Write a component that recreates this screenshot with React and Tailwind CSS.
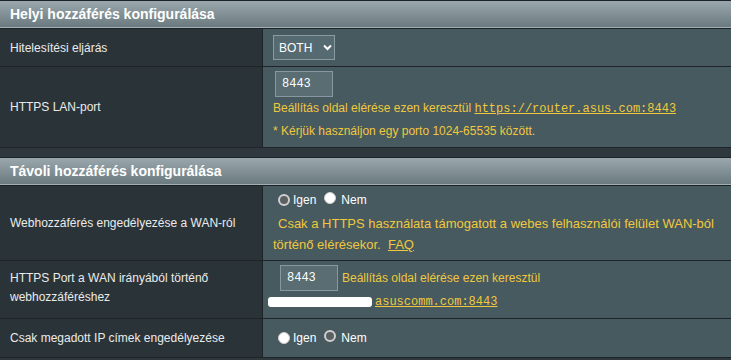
import React from "react";

const font = { fontFamily: '"Liberation Sans", Arial, sans-serif' };

function Header({ children }) {
  return (
    <div className="h-[29px] border-t border-[#1c2326] flex flex-col">
      <div className="h-[26px] bg-gradient-to-b from-[#9aa8ad] to-[#6b7a7f] flex items-center pl-[10px] text-white text-[14px] font-bold">
        {children}
      </div>
      <div className="h-px bg-[#a3b0b3]" />
      <div className="h-px bg-[#1c2326]" />
    </div>
  );
}

function Row({ h, label, children, labelClass = "" }) {
  return (
    <div className={`flex border-b border-[#1e2427] ${h}`}>
      <div className={`w-[263px] shrink-0 bg-[#2a3438] border-r border-[#1e2427] flex items-center pl-[10px] text-[12px] text-[#ebebeb] ${labelClass}`}>
        {label}
      </div>
      <div className="flex-1 bg-[#475a5f] min-w-0">{children}</div>
    </div>
  );
}

function Radio({ on }) {
  return on ? (
    <span className="inline-block w-[12px] h-[12px] rounded-full bg-white border border-[#cfcfcf]" />
  ) : (
    <span className="inline-block w-[12px] h-[12px] rounded-full border-2 border-[#cfcfcf] bg-[#5b6163]" />
  );
}

function Radios({ first }) {
  return (
    <div className="flex items-center text-[12px] text-white h-[20px]">
      <Radio on={!first} />
      <span className="ml-[3px]">Igen</span>
      <span className="ml-[8px]"><Radio on={first} /></span>
      <span className="ml-[5px]">Nem</span>
    </div>
  );
}

function Input() {
  return (
    <div className="w-[58px] h-[26px] bg-[#596d73] border border-[#8798a0] flex items-center pl-[6px] text-white text-[12px]" style={{ fontFamily: '"Liberation Mono", monospace' }}>
      8443
    </div>
  );
}

const mono = { fontFamily: '"Liberation Mono", "Courier New", monospace' };

export default function App() {
  return (
    <div className="w-[731px] h-[360px] bg-[#2f393d] overflow-hidden" style={font}>
      <Header>Helyi hozzáférés konfigurálása</Header>
      <Row h="h-[38px]" label="Hitelesítési eljárás">
        <div className="h-full flex items-center pl-[10px]">
          <div className="w-[62px] h-[25px] bg-[#566b71] border border-[#8a9ba0] flex items-center pl-[5px] text-white text-[12px]">
            <span>BOTH</span>
            <svg width="9" height="7" viewBox="0 0 9 7" className="ml-[11px]">
              <path d="M1 1.5 L4.5 5 L8 1.5" stroke="white" strokeWidth="2" fill="none" />
            </svg>
          </div>
        </div>
      </Row>
      <Row h="h-[81px]" label="HTTPS LAN-port">
        <div className="pl-[10px] pt-[4px]">
          <div className="pl-[2px]"><Input /></div>
          <div className="text-[12px] text-[#f0c83e] leading-[22px]">
            Beállítás oldal elérése ezen keresztül{" "}
            <span className="underline" style={mono}>https://router.asus.com:8443</span>
          </div>
          <div className="text-[12px] text-[#f0c83e] leading-[22px]">
            * Kérjük használjon egy porto 1024-65535 között.
          </div>
        </div>
      </Row>
      <div className="h-[9px]" />
      <Header>Távoli hozzáférés konfigurálása</Header>
      <Row h="h-[75px]" label="Webhozzáférés engedélyezése a WAN-ról">
        <div className="pl-[15px] pt-[4px]">
          <Radios first={true} />
        </div>
        <div className="pl-[10px] pt-[3px] text-[13px] text-[#f0c83e] leading-[21px]">
          <div className="pl-[5px]">Csak a HTTPS használata támogatott a webes felhasználói felület WAN-ból</div>
          <div>
            történő elérésekor.&nbsp;&nbsp;<span className="underline">FAQ</span>
          </div>
        </div>
      </Row>
      <Row h="h-[58px]" label={<div className="leading-[19px] pb-[3px]">HTTPS Port a WAN irányából történő<br />webhozzáféréshez</div>}>
        <div className="pl-[17px] pt-[4px] flex items-center">
          <Input />
          <span className="ml-[4px] text-[12px] text-[#f0c83e]">Beállítás oldal elérése ezen keresztül</span>
        </div>
        <div className="flex items-center pl-[5px] mt-[2px] h-[18px]">
          <div className="w-[104px] h-[10px] bg-white rounded-[3px]" />
          <span className="ml-[3px] text-[12px] text-[#f0c83e] underline" style={mono}>asuscomm.com:8443</span>
        </div>
      </Row>
      <Row h="h-[39px]" label="Csak megadott IP címek engedélyezése">
        <div className="h-full flex items-center pl-[15px]">
          <Radios first={false} />
        </div>
      </Row>
    </div>
  );
}
